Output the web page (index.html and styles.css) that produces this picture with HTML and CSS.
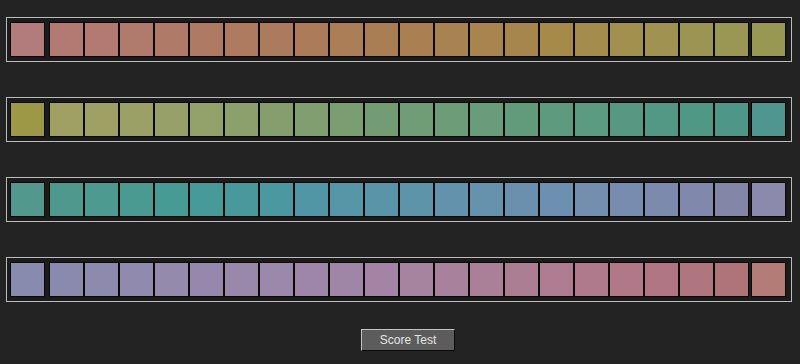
FILE: index.html
```html
<!DOCTYPE html>
<html lang="en">
<head>
<meta charset="utf-8">
<title>Hue Test</title>
<link rel="stylesheet" href="styles.css">
</head>
<body>
<main class="test">
  <div class="rows">
    <div class="row">
      <div class="cap" style="background:rgb(178,124,124)"></div>
      <div class="tray">
        <div class="cap" style="background:rgb(178,122,114)"></div>
        <div class="cap" style="background:rgb(178,122,112)"></div>
        <div class="cap" style="background:rgb(176,122,108)"></div>
        <div class="cap" style="background:rgb(176,122,104)"></div>
        <div class="cap" style="background:rgb(174,122,100)"></div>
        <div class="cap" style="background:rgb(174,122,96)"></div>
        <div class="cap" style="background:rgb(172,122,92)"></div>
        <div class="cap" style="background:rgb(172,124,90)"></div>
        <div class="cap" style="background:rgb(172,126,88)"></div>
        <div class="cap" style="background:rgb(170,126,84)"></div>
        <div class="cap" style="background:rgb(170,128,82)"></div>
        <div class="cap" style="background:rgb(168,130,80)"></div>
        <div class="cap" style="background:rgb(168,132,78)"></div>
        <div class="cap" style="background:rgb(166,134,76)"></div>
        <div class="cap" style="background:rgb(166,138,74)"></div>
        <div class="cap" style="background:rgb(164,140,76)"></div>
        <div class="cap" style="background:rgb(162,144,78)"></div>
        <div class="cap" style="background:rgb(160,146,80)"></div>
        <div class="cap" style="background:rgb(156,148,82)"></div>
        <div class="cap" style="background:rgb(154,150,84)"></div>
      </div>
      <div class="cap" style="background:rgb(152,152,82)"></div>
    </div>

    <div class="row">
      <div class="cap" style="background:rgb(156,152,70)"></div>
      <div class="tray">
        <div class="cap" style="background:rgb(160,160,98)"></div>
        <div class="cap" style="background:rgb(158,160,100)"></div>
        <div class="cap" style="background:rgb(154,160,102)"></div>
        <div class="cap" style="background:rgb(150,160,104)"></div>
        <div class="cap" style="background:rgb(146,160,106)"></div>
        <div class="cap" style="background:rgb(140,160,108)"></div>
        <div class="cap" style="background:rgb(134,158,110)"></div>
        <div class="cap" style="background:rgb(128,158,112)"></div>
        <div class="cap" style="background:rgb(122,158,114)"></div>
        <div class="cap" style="background:rgb(116,156,116)"></div>
        <div class="cap" style="background:rgb(112,156,118)"></div>
        <div class="cap" style="background:rgb(108,156,120)"></div>
        <div class="cap" style="background:rgb(104,156,122)"></div>
        <div class="cap" style="background:rgb(98,154,124)"></div>
        <div class="cap" style="background:rgb(94,154,126)"></div>
        <div class="cap" style="background:rgb(90,154,128)"></div>
        <div class="cap" style="background:rgb(86,152,130)"></div>
        <div class="cap" style="background:rgb(82,152,132)"></div>
        <div class="cap" style="background:rgb(80,152,134)"></div>
        <div class="cap" style="background:rgb(78,150,136)"></div>
      </div>
      <div class="cap" style="background:rgb(80,150,144)"></div>
    </div>

    <div class="row">
      <div class="cap" style="background:rgb(82,152,140)"></div>
      <div class="tray">
        <div class="cap" style="background:rgb(78,152,142)"></div>
        <div class="cap" style="background:rgb(76,154,144)"></div>
        <div class="cap" style="background:rgb(74,154,146)"></div>
        <div class="cap" style="background:rgb(70,156,148)"></div>
        <div class="cap" style="background:rgb(70,154,152)"></div>
        <div class="cap" style="background:rgb(72,152,156)"></div>
        <div class="cap" style="background:rgb(76,152,160)"></div>
        <div class="cap" style="background:rgb(80,150,164)"></div>
        <div class="cap" style="background:rgb(86,150,166)"></div>
        <div class="cap" style="background:rgb(90,148,168)"></div>
        <div class="cap" style="background:rgb(94,148,170)"></div>
        <div class="cap" style="background:rgb(98,146,172)"></div>
        <div class="cap" style="background:rgb(102,146,174)"></div>
        <div class="cap" style="background:rgb(106,144,174)"></div>
        <div class="cap" style="background:rgb(110,144,176)"></div>
        <div class="cap" style="background:rgb(116,142,176)"></div>
        <div class="cap" style="background:rgb(120,140,176)"></div>
        <div class="cap" style="background:rgb(124,138,174)"></div>
        <div class="cap" style="background:rgb(128,136,172)"></div>
        <div class="cap" style="background:rgb(132,134,168)"></div>
      </div>
      <div class="cap" style="background:rgb(140,138,172)"></div>
    </div>

    <div class="row">
      <div class="cap" style="background:rgb(136,138,174)"></div>
      <div class="tray">
        <div class="cap" style="background:rgb(138,138,174)"></div>
        <div class="cap" style="background:rgb(142,138,174)"></div>
        <div class="cap" style="background:rgb(144,138,174)"></div>
        <div class="cap" style="background:rgb(148,138,172)"></div>
        <div class="cap" style="background:rgb(150,136,172)"></div>
        <div class="cap" style="background:rgb(154,136,170)"></div>
        <div class="cap" style="background:rgb(156,136,170)"></div>
        <div class="cap" style="background:rgb(158,134,168)"></div>
        <div class="cap" style="background:rgb(160,134,166)"></div>
        <div class="cap" style="background:rgb(164,132,164)"></div>
        <div class="cap" style="background:rgb(166,132,160)"></div>
        <div class="cap" style="background:rgb(168,130,156)"></div>
        <div class="cap" style="background:rgb(170,128,152)"></div>
        <div class="cap" style="background:rgb(172,126,148)"></div>
        <div class="cap" style="background:rgb(174,124,144)"></div>
        <div class="cap" style="background:rgb(174,122,140)"></div>
        <div class="cap" style="background:rgb(176,120,136)"></div>
        <div class="cap" style="background:rgb(176,118,132)"></div>
        <div class="cap" style="background:rgb(176,118,128)"></div>
        <div class="cap" style="background:rgb(174,116,122)"></div>
      </div>
      <div class="cap" style="background:rgb(180,124,118)"></div>
    </div>
  </div>
  <button class="score" type="button">Score Test</button>
</main>
</body>
</html>
```

FILE: styles.css
```css
html, body {
  margin: 0;
  padding: 0;
  background: #232323;
}

body {
  font-family: "Liberation Sans", Arial, sans-serif;
}

.test {
  padding: 17px 0 0 6px;
}

.rows {
  display: flex;
  flex-direction: column;
  gap: 35px;
}

.row {
  display: flex;
  width: 786px;
  box-sizing: border-box;
  border: 1px solid #bcbcbc;
  background: #1b1b1b;
  padding: 4px 5px 4px 3px;
}

.tray {
  display: flex;
  margin: 0 2px 0 4px;
}

.cap {
  flex: none;
  width: 35px;
  height: 35px;
  box-sizing: border-box;
  border: 1px solid #0b0808;
}

.score {
  display: block;
  margin: 27px 0 0 355px;
  width: 94px;
  height: 22px;
  padding: 0;
  box-sizing: border-box;
  background: #5c5c5c;
  color: #e4e4e4;
  font-family: "Liberation Sans", Arial, sans-serif;
  font-size: 12px;
  border-style: solid;
  border-width: 1px;
  border-color: #c4c4c4 #0a0a0a #0a0a0a #c4c4c4;
  border-radius: 0;
}
```
